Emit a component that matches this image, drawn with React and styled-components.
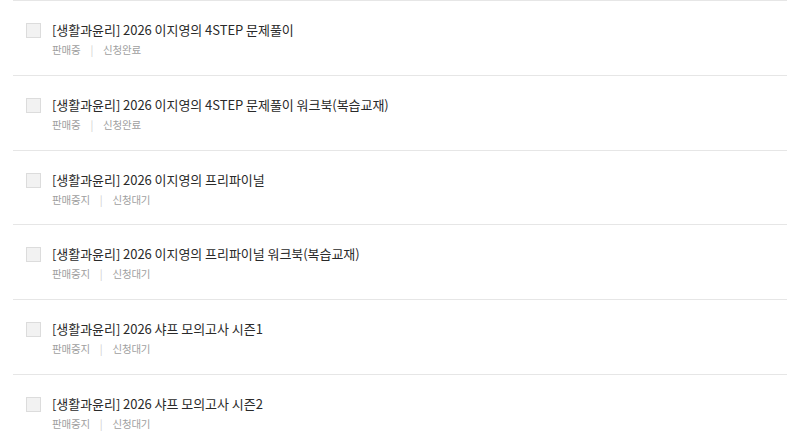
import styled, { createGlobalStyle } from 'styled-components';

const GlobalStyle = createGlobalStyle`
    html, body {
        margin: 0;
        padding: 0;
        background: #fff;
    }
    body {
        font-family: "Noto Sans CJK KR", "Noto Sans", sans-serif;
        color: #333;
    }
`;

const items = [
    { title: '[생활과윤리] 2026 이지영의 4STEP 문제풀이', sale: '판매중', status: '신청완료' },
    { title: '[생활과윤리] 2026 이지영의 4STEP 문제풀이 워크북(복습교재)', sale: '판매중', status: '신청완료' },
    { title: '[생활과윤리] 2026 이지영의 프리파이널', sale: '판매중지', status: '신청대기' },
    { title: '[생활과윤리] 2026 이지영의 프리파이널 워크북(복습교재)', sale: '판매중지', status: '신청대기' },
    { title: '[생활과윤리] 2026 샤프 모의고사 시즌1', sale: '판매중지', status: '신청대기' },
    { title: '[생활과윤리] 2026 샤프 모의고사 시즌2', sale: '판매중지', status: '신청대기' },
];

const App = () => {
    return (
        <>
            <GlobalStyle />
            <List>
                {items.map((item) => (
                    <Row key={item.title}>
                        <Check />
                        <Info>
                            <Title>{item.title}</Title>
                            <Meta>
                                <span>{item.sale}</span>
                                <Divider>|</Divider>
                                <span>{item.status}</span>
                            </Meta>
                        </Info>
                    </Row>
                ))}
            </List>
        </>
    );
}

export default App;

const List = styled.div`
    padding: 0 13px;
    display: flex;
    flex-direction: column;
`;

const Row = styled.div`
    display: flex;
    align-items: flex-start;
    box-sizing: content-box;
    height: 54.8px;
    padding: 19px 0 0 13px;
    border-top: 1px solid #e6e6e6;
`;

const Check = styled.span`
    width: 13px;
    height: 13px;
    margin-top: 3px;
    margin-right: 11px;
    flex-shrink: 0;
    background: #f2f2f2;
    border: 1px solid #dcdcdc;
`;

const Info = styled.div`
    display: flex;
    flex-direction: column;
`;

const Title = styled.div`
    font-size: 13px;
    line-height: 20px;
    letter-spacing: -0.05px;
    color: #2a2a2a;
`;

const Meta = styled.div`
    display: flex;
    align-items: center;
    margin-top: 2px;
    font-size: 10.5px;
    line-height: 16px;
    color: #a0a0a0;
    letter-spacing: -0.2px;
`;

const Divider = styled.span`
    margin: 0 10px;
    color: #cfcfcf;
`;
